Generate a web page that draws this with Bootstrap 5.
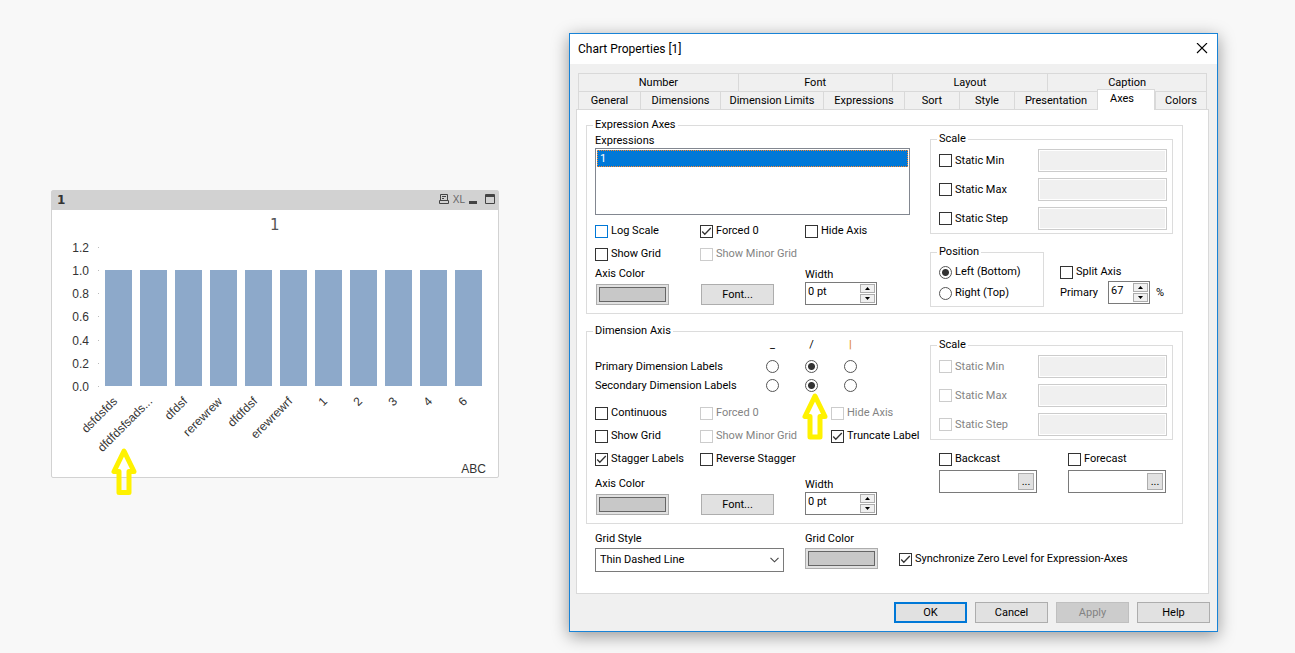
<!DOCTYPE html>
<html lang="en">
<head>
<meta charset="utf-8">
<meta name="viewport" content="width=device-width, initial-scale=1">
<title>Chart Properties</title>
<link href="https://cdn.jsdelivr.net/npm/bootstrap@5.3.0/dist/css/bootstrap.min.css" rel="stylesheet">
<style>
  body { background: #f8f8f8; color: #000; font: 11px/14px Roboto, sans-serif; }
  .desk { display: grid; grid-template-columns: 448fr 649fr; column-gap: 70px; padding: 33px 77px 22px 51px; align-items: start; }

  /* chart window */
  .chart-win { margin-top: 157px; background: #fff; border: 1px solid #d2d2d2; border-radius: 2px; }
  .chart-cap { background: #d2d2d2; height: 19px; padding: 0 3px 0 5px; color: #333; }
  .chart-cap h2 { font: bold 12px/18px "DejaVu Sans", sans-serif; }
  .chart-cap button { border: 0; background: none; padding: 0; color: #444; line-height: 0; }
  .chart-cap .tools { gap: 4px; padding-top: 3px; }
  .chart-cap .xl { font: 10px/11px "Liberation Sans", sans-serif; color: #666; }
  .plot { display: block; width: 100%; font-family: "Liberation Sans", sans-serif; font-size: 12px; fill: #333; }
  .plot .chart-title { font-family: "DejaVu Sans", sans-serif; font-size: 15px; fill: #555; }
  .pointer { position: absolute; fill: none; stroke: #fff200; stroke-width: 5; stroke-linejoin: round; pointer-events: none; overflow: visible; }
  .pointer-chart { left: 13%; bottom: -18px; }
  .pointer-angle { left: 66%; top: 54px; }

  /* dialog window */
  .dialog { background: #f0f0f0; border: 1px solid #1883d7; box-shadow: 0 4px 16px rgba(0,0,0,.4); }
  .dialog-cap { background: #fff; height: 30px; padding: 0 9px 0 8px; }
  .dialog-cap h1 { font: 12px/16px Roboto, sans-serif; }
  .dialog-cap button { border: 0; background: none; padding: 0; line-height: 0; }
  .tabs-top, .tabs-low { display: grid; margin: 0 10px 0 8px; }
  .tabs-top { grid-template-columns: 160fr 154fr 156fr 159fr; border: 1px solid #d9d9d9; border-width: 1px 1px 0 0; margin-top: 9px; }
  .tabs-low { grid-template-columns: 62fr 80fr 103fr 81fr 55fr 55fr 83fr 58fr 52fr; }
  .tabs-top button, .tabs-low button { height: 18px; border: 0; border-left: 1px solid #d9d9d9; background: none; padding: 1px 0 0; white-space: nowrap; line-height: 16px; }
  .tabs-top button { height: 17px; }
  .tabs-low button { border-top: 1px solid #d9d9d9; }
  .tabs-low button:last-child { border-right: 1px solid #d9d9d9; }
  .tabs-low button.active { position: relative; height: 21px; margin: -2px 0 -1px; background: #fff; border-right: 1px solid #d9d9d9; padding: 0 8px 3px 0; }
  .sheet { background: #fff; border: 1px solid #d9d9d9; margin: 0 8px 0 6px; padding: 8px 25px 21px 9px; }

  /* group boxes */
  fieldset { border: 1px solid #dcdcdc; }
  legend { float: none; width: auto; margin: 0 0 0 6px; padding: 0 2px; font-size: 11px; line-height: 14px; height: 14px; }
  .outer { padding: 0 9px 6px 0; }
  .second { margin-top: 10px; padding-bottom: 8px; }
  .halves { display: grid; grid-template-columns: 315fr 243fr; column-gap: 20px; padding-left: 8px; }
  .thirds { display: grid; grid-template-columns: 1fr 1fr 1fr; }
  .wide-third { display: grid; grid-template-columns: minmax(0,105fr) minmax(0,131fr) minmax(0,79fr); row-gap: 7px; }
  .expr-label { padding-top: 2px; }
  .exprs { height: 67px; border: 1px solid #828790; padding: 1px; background: #fff; }
  .exprs div { background: #0078d7; color: #fff; border: 1px dotted #ff8728; height: 17px; padding-left: 2px; line-height: 15px; }
  .line-2 { margin-top: 7px; }

  /* controls */
  .chk { display: flex; align-items: center; gap: 3px; height: 16px; white-space: nowrap; }
  input[type=checkbox], input[type=radio] { appearance: none; flex: none; width: 13px; height: 13px; margin: 0; border: 1px solid #333; background: #fff center/11px 11px no-repeat; }
  input[type=radio] { border-radius: 50%; border-color: #555; }
  input[type=checkbox]:checked { background-image: url("data:image/svg+xml,%3Csvg xmlns='http://www.w3.org/2000/svg' viewBox='0 0 11 11'%3E%3Cpath d='M1.2 5.5l2.6 2.7L9.8 2' fill='none' stroke='%23333' stroke-width='1.3'/%3E%3C/svg%3E"); }
  input[type=radio]:checked { background-image: radial-gradient(circle, #333 3px, transparent 4px); }
  input[type=checkbox].hot { border-color: #0078d7; }
  input[type]:disabled { border-color: #ccc; }
  input:disabled + label { color: #838383; }
  .flat { border: 1px solid #adadad; background: #e1e1e1; height: 21px; width: 73px; padding: 0; line-height: 17px; }
  .flat.main { border: 2px solid #0078d7; }
  .flat:disabled { background: #ccc; border-color: #bfbfbf; color: #838383; }
  .swatch-btn { display: block; padding: 2px; }
  .swatch-btn span { display: block; height: 15px; border: 1px solid #666; background: #c8c8c8; }
  .edit { border: 1px solid #7a7a7a; background: #fff; height: 23px; }
  .edit input { border: 0; background: none; padding: 0 1px 4px 2px; width: 100%; min-width: 0; }
  .stepper { flex: none; width: 17px; padding: 1px; gap: 1px; }
  .stepper button { border: 1px solid #adadad; background: #f0f0f0; flex: 1; padding: 0; line-height: 0; }
  .stepper svg { display: block; margin: 0 auto; }
  .more { flex: none; width: 16px; height: 17px; margin: 2px; border: 1px solid #adadad; background: #e1e1e1; padding: 0; line-height: 14px; }
  .blank { width: 100%; height: 23px; border: 1px solid #ccc; background: #f0f0f0; box-shadow: inset 0 0 0 1px #fff; }
  .combo { width: 100%; height: 24px; border: 1px solid #7a7a7a; border-radius: 0; appearance: none; padding: 0 4px; color: #000; background: #fff url("data:image/svg+xml,%3Csvg xmlns='http://www.w3.org/2000/svg' viewBox='0 0 9 6'%3E%3Cpath d='M.5.8l4 4 4-4' fill='none' stroke='%23444' stroke-width='1.1'/%3E%3C/svg%3E") right 4px center/9px 6px no-repeat; }

  .style-row { margin-top: 5px; }
  .style-row.low { margin-top: 10px; }
  .style-row label { display: block; }
  .style-row .flat { margin-left: 1px; }
  .style-row .swatch-btn { margin-top: 3px; }
  .spin { width: 72px; }
  .scale-rows { display: grid; grid-template-columns: 99fr 129fr; row-gap: 6px; align-items: center; padding: 3px 5px 3px 8px; }
  .place { display: grid; grid-template-columns: 114fr 113fr; column-gap: 16px; margin-top: 11px; }
  .radios { gap: 5px; padding: 5px 8px; }
  .split { padding-top: 19px; }
  .primary-row { gap: 6px; margin-top: 1px; }
  .primary-row .edit { width: 42px; margin-left: 4px; }
  .angles { display: grid; grid-template-columns: 158fr 39fr 39fr 39fr 40fr; justify-items: center; align-items: center; grid-auto-rows: 19px; white-space: nowrap; margin-bottom: 10px; }
  .angles > :nth-child(4n+1) { grid-column: 1; justify-self: start; }
  .angles .angle-sign { align-self: start; }
  .angles .upright { color: #e08a2e; font-weight: bold; }
  .casts { display: grid; grid-template-columns: 98fr 98fr; column-gap: 31px; padding: 0 7px 0 9px; margin-top: 11px; }
  .casts .edit { margin-top: 3px; }
  .bottom-row { display: grid; grid-template-columns: minmax(0,189fr) minmax(0,73fr) minmax(0,284fr); column-gap: 21px; padding: 8px 0 0 9px; }
  .bottom-row .combo, .bottom-row .swatch-btn { margin-top: 2px; }
  .bottom-row .chk { margin-bottom: 5px; }
  .dialog-foot { padding: 8px 7px; }
</style>
</head>
<body>
<main class="desk">
  <section class="chart-win position-relative">
    <header class="chart-cap d-flex justify-content-between">
      <h2 class="m-0">1</h2>
      <div class="tools d-flex align-items-start">
        <button aria-label="Print"><svg width="10" height="11" fill="none" stroke="#444"><path d="M1.500 6.500v-6h7v6M3 2.500h4M3 4.500h2M.5 6.500h9v3h-9z"/></svg></button>
        <button class="xl">XL</button>
        <button aria-label="Minimize"><svg width="8" height="11"><path d="M0 7h8v3H0z" fill="#444"/></svg></button>
        <button class="ms-1" aria-label="Maximize"><svg width="10" height="11" fill="none" stroke="#444"><path d="M.5.5h9v9h-9zM0 1.500h10M0 2.500h10"/></svg></button>
      </div>
    </header>
    <svg class="plot" viewBox="0 0 446 267" role="img" aria-label="Bar chart">
      <text class="chart-title" x="218" y="20">1</text>
      <g text-anchor="end">
        <text x="37" y="42">1.2</text><text x="37" y="65">1.0</text><text x="37" y="88">0.8</text><text x="37" y="111">0.6</text>
        <text x="37" y="135">0.4</text><text x="37" y="158">0.2</text><text x="37" y="181">0.0</text>
      </g>
      <path d="M46 37.500h1M46 60.500h1M46 83.500h1M46 106.500h1M46 130.500h1M46 153.500h1M46 176.500h1" stroke="#bbb"/>
      <path fill="#8da9ca" d="M53 60h27v116H53zM88 60h27v116H88zM123 60h27v116h-27zM158 60h27v116h-27zM193 60h27v116h-27zM228 60h27v116h-27zM263 60h27v116h-27zM298 60h27v116h-27zM333 60h27v116h-27zM368 60h27v116h-27zM403 60h27v116h-27z"/>
      <g text-anchor="end">
        <text transform="translate(66 192) rotate(-45)">dsfdsfds</text>
        <text transform="translate(101 192) rotate(-45)">dfdfdsfsads...</text>
        <text transform="translate(136 192) rotate(-45)">dfdsf</text>
        <text transform="translate(171 192) rotate(-45)">rerewrew</text>
        <text transform="translate(206 192) rotate(-45)">dfdfdsf</text>
        <text transform="translate(241 192) rotate(-45)">erewrewrf</text>
        <text transform="translate(276 192) rotate(-45)">1</text>
        <text transform="translate(311 192) rotate(-45)">2</text>
        <text transform="translate(346 192) rotate(-45)">3</text>
        <text transform="translate(381 192) rotate(-45)">4</text>
        <text transform="translate(416 192) rotate(-45)">6</text>
        <text x="434" y="263">ABC</text>
      </g>
    </svg>
    <svg class="pointer pointer-chart" width="28" height="47"><path d="M14 3L4 23.500h5V44.500h10V23.500h5z"/></svg>
  </section>

  <section class="dialog">
    <header class="dialog-cap d-flex justify-content-between align-items-center">
      <h1 class="m-0">Chart Properties [1]</h1>
      <button aria-label="Close"><svg width="12" height="12" stroke="#000" stroke-width="1.100"><path d="M1 0l10 10M11 0L1 10"/></svg></button>
    </header>
    <nav>
      <div class="tabs-top"><button>Number</button><button>Font</button><button>Layout</button><button>Caption</button></div>
      <div class="tabs-low"><button>General</button><button>Dimensions</button><button>Dimension Limits</button><button>Expressions</button><button>Sort</button><button>Style</button><button>Presentation</button><button class="active">Axes</button><button>Colors</button></div>
    </nav>

    <form class="sheet">
      <fieldset class="outer">
        <legend>Expression Axes</legend>
        <div class="halves">
          <div>
            <div id="exl" class="expr-label">Expressions</div>
            <div class="exprs" role="listbox" aria-labelledby="exl"><div role="option" aria-selected="true">1</div></div>
            <div class="thirds mt-2">
              <div class="chk"><input type="checkbox" class="hot" id="e1"><label for="e1">Log Scale</label></div>
              <div class="chk"><input type="checkbox" id="e2" checked><label for="e2">Forced 0</label></div>
              <div class="chk"><input type="checkbox" id="e3"><label for="e3">Hide Axis</label></div>
            </div>
            <div class="thirds line-2">
              <div class="chk"><input type="checkbox" id="e4"><label for="e4">Show Grid</label></div>
              <div class="chk"><input type="checkbox" id="e5" disabled><label for="e5">Show Minor Grid</label></div>
            </div>
            <div class="thirds style-row align-items-end">
              <div><label for="ec">Axis Color</label><button type="button" id="ec" class="flat swatch-btn"><span></span></button></div>
              <div><button type="button" class="flat d-block">Font...</button></div>
              <div><label for="ew">Width</label>
                <div class="edit spin d-flex"><input id="ew" value="0 pt"><div class="stepper d-flex flex-column"><button type="button" aria-label="Up"><svg width="5" height="3"><path d="M0 3L2.500 0 5 3z"/></svg></button><button type="button" aria-label="Down"><svg width="5" height="3"><path d="M0 0l2.500 3L5 0z"/></svg></button></div></div></div>
            </div>
          </div>
          <div>
            <fieldset>
              <legend>Scale</legend>
              <div class="scale-rows">
                <div class="chk"><input type="checkbox" id="s1"><label for="s1">Static Min</label></div><input class="blank" aria-label="Static Min value" disabled>
                <div class="chk"><input type="checkbox" id="s2"><label for="s2">Static Max</label></div><input class="blank" aria-label="Static Max value" disabled>
                <div class="chk"><input type="checkbox" id="s3"><label for="s3">Static Step</label></div><input class="blank" aria-label="Static Step value" disabled>
              </div>
            </fieldset>
            <div class="place">
              <fieldset>
                <legend>Position</legend>
                <div class="radios d-flex flex-column">
                  <div class="chk"><input type="radio" name="pos" id="p1" checked><label for="p1">Left (Bottom)</label></div>
                  <div class="chk"><input type="radio" name="pos" id="p2"><label for="p2">Right (Top)</label></div>
                </div>
              </fieldset>
              <div class="split">
                <div class="chk"><input type="checkbox" id="sp"><label for="sp">Split Axis</label></div>
                <div class="d-flex align-items-center primary-row"><label for="pr">Primary</label>
                  <div class="edit d-flex"><input id="pr" value="67"><div class="stepper d-flex flex-column"><button type="button" aria-label="Up"><svg width="5" height="3"><path d="M0 3L2.500 0 5 3z"/></svg></button><button type="button" aria-label="Down"><svg width="5" height="3"><path d="M0 0l2.500 3L5 0z"/></svg></button></div></div><span>%</span></div>
              </div>
            </div>
          </div>
        </div>
      </fieldset>

      <fieldset class="outer second">
        <legend>Dimension Axis</legend>
        <div class="halves">
          <div class="position-relative">
            <div class="angles">
              <span></span><span class="angle-sign">_</span><span class="angle-sign">/</span><span class="angle-sign upright">|</span>
              <span>Primary Dimension Labels</span><input type="radio" name="pd" aria-label="Primary horizontal"><input type="radio" name="pd" aria-label="Primary slanted" checked><input type="radio" name="pd" aria-label="Primary vertical">
              <span>Secondary Dimension Labels</span><input type="radio" name="sd" aria-label="Secondary horizontal"><input type="radio" name="sd" aria-label="Secondary slanted" checked><input type="radio" name="sd" aria-label="Secondary vertical">
            </div>
            <div class="wide-third">
              <div class="chk"><input type="checkbox" id="d1"><label for="d1">Continuous</label></div>
              <div class="chk"><input type="checkbox" id="d2" disabled><label for="d2">Forced 0</label></div>
              <div class="chk"><input type="checkbox" id="d3" disabled><label for="d3">Hide Axis</label></div>
              <div class="chk"><input type="checkbox" id="d4"><label for="d4">Show Grid</label></div>
              <div class="chk"><input type="checkbox" id="d5" disabled><label for="d5">Show Minor Grid</label></div>
              <div class="chk"><input type="checkbox" id="d6" checked><label for="d6">Truncate Label</label></div>
              <div class="chk"><input type="checkbox" id="d7" checked><label for="d7">Stagger Labels</label></div>
              <div class="chk"><input type="checkbox" id="d8"><label for="d8">Reverse Stagger</label></div>
            </div>
            <div class="thirds style-row low align-items-end">
              <div><label for="dc">Axis Color</label><button type="button" id="dc" class="flat swatch-btn"><span></span></button></div>
              <div><button type="button" class="flat d-block">Font...</button></div>
              <div><label for="dw">Width</label>
                <div class="edit spin d-flex"><input id="dw" value="0 pt"><div class="stepper d-flex flex-column"><button type="button" aria-label="Up"><svg width="5" height="3"><path d="M0 3L2.500 0 5 3z"/></svg></button><button type="button" aria-label="Down"><svg width="5" height="3"><path d="M0 0l2.500 3L5 0z"/></svg></button></div></div></div>
            </div>
            <svg class="pointer pointer-angle" width="26" height="49"><path d="M12 4L2 24.500h5V45h10V24.500h5z"/></svg>
          </div>
          <div>
            <fieldset>
              <legend>Scale</legend>
              <div class="scale-rows">
                <div class="chk"><input type="checkbox" id="t1" disabled><label for="t1">Static Min</label></div><input class="blank" aria-label="Static Min value" disabled>
                <div class="chk"><input type="checkbox" id="t2" disabled><label for="t2">Static Max</label></div><input class="blank" aria-label="Static Max value" disabled>
                <div class="chk"><input type="checkbox" id="t3" disabled><label for="t3">Static Step</label></div><input class="blank" aria-label="Static Step value" disabled>
              </div>
            </fieldset>
            <div class="casts">
              <div><div class="chk"><input type="checkbox" id="bc"><label for="bc">Backcast</label></div><div class="edit d-flex"><input aria-label="Backcast value"><button type="button" class="more">...</button></div></div>
              <div><div class="chk"><input type="checkbox" id="fc"><label for="fc">Forecast</label></div><div class="edit d-flex"><input aria-label="Forecast value"><button type="button" class="more">...</button></div></div>
            </div>
          </div>
        </div>
      </fieldset>

      <div class="bottom-row">
        <div><label for="gs" class="d-block">Grid Style</label><select id="gs" class="combo d-block"><option>Thin Dashed Line</option></select></div>
        <div><label for="gc" class="d-block">Grid Color</label><button type="button" id="gc" class="flat swatch-btn w-100"><span></span></button></div>
        <div class="chk align-self-end"><input type="checkbox" id="sy" checked><label for="sy">Synchronize Zero Level for Expression-Axes</label></div>
      </div>
    </form>
    <footer class="d-flex justify-content-end gap-2 dialog-foot">
      <button class="flat main">OK</button><button class="flat">Cancel</button><button class="flat" disabled>Apply</button><button class="flat">Help</button>
    </footer>
  </section>
</main>
<script src="https://cdn.jsdelivr.net/npm/bootstrap@5.3.0/dist/js/bootstrap.bundle.min.js"></script>
</body>
</html>
